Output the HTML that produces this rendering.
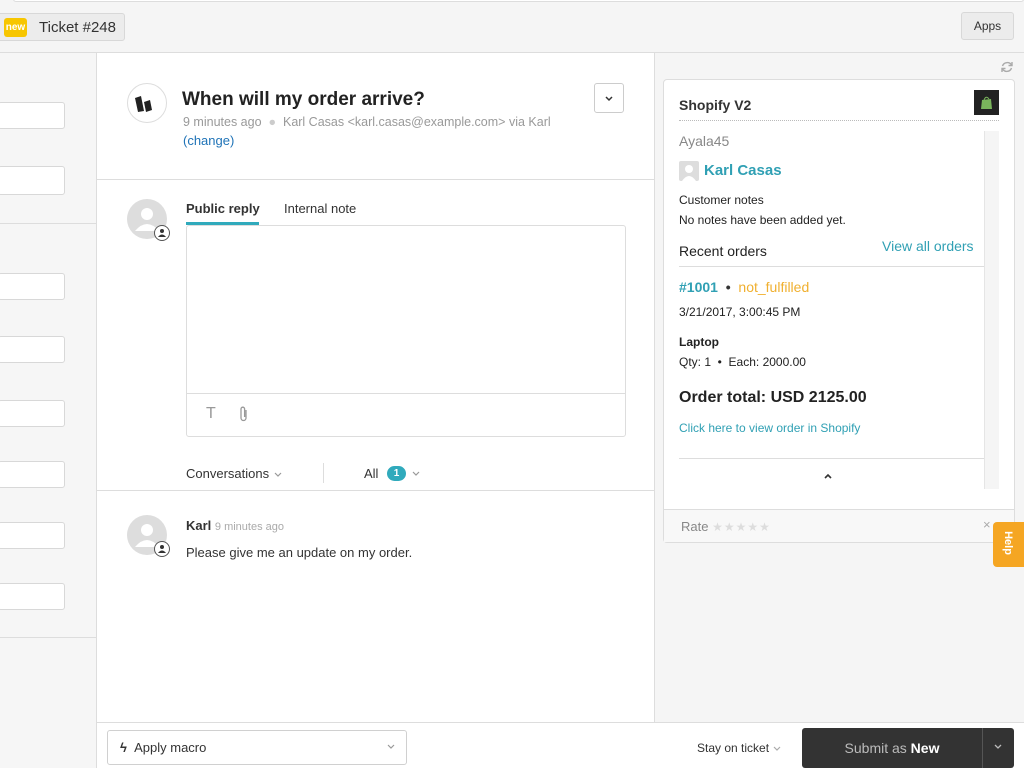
<!DOCTYPE html>
<html><head><meta charset="utf-8"><style>
*{box-sizing:border-box;margin:0;padding:0}
body{width:1024px;height:768px;overflow:hidden;font-family:"Liberation Sans",sans-serif;color:#333;background:#f5f5f5;position:relative;font-size:13px}
.abs{position:absolute}
.inp{position:absolute;left:-2px;width:67px;height:27px;background:#fff;border:1px solid #d8d8d8;border-radius:3px}
.av{position:absolute;width:40px;height:40px;border-radius:50%;background:#ddd;overflow:hidden}
.badge{position:absolute;width:16px;height:16px;border-radius:50%;background:#fff;border:1px solid #555}
.chev{display:inline-block;vertical-align:middle}
</style></head><body>
<div class="abs" style="left:0;top:0;width:1024px;height:53px;background:#f5f5f5;border-bottom:1px solid #ddd"></div>
<div class="abs" style="left:13px;top:-4px;width:1011px;height:6px;background:#fff;border:1px solid #ddd;border-radius:3px"></div>
<div class="abs" style="left:-3px;top:13px;width:128px;height:28px;background:#ececec;border:1px solid #d8d8d8;border-radius:3px"></div>
<div class="abs" style="left:4px;top:18px;width:23px;height:19px;background:#f7c600;border-radius:3px;color:#fff;font-size:10px;font-weight:bold;text-align:center;line-height:19px">new</div>
<div class="abs" style="left:39px;top:18px;font-size:15px;color:#333;line-height:19px">Ticket #248</div>
<div class="abs" style="left:961px;top:12px;width:53px;height:28px;background:#ececec;border:1px solid #d8d8d8;border-radius:3px;font-size:12px;text-align:center;line-height:26px">Apps</div>
<div class="abs" style="left:0;top:53px;width:97px;height:715px;background:#f6f6f6;border-right:1px solid #ddd"></div>
<div class="inp" style="top:102px"></div><div class="inp" style="top:166px;height:29px"></div>
<div class="abs" style="left:0;top:223px;width:96px;height:1px;background:#ddd"></div>
<div class="inp" style="top:273px"></div><div class="inp" style="top:336px"></div><div class="inp" style="top:400px"></div><div class="inp" style="top:461px"></div><div class="inp" style="top:522px"></div><div class="inp" style="top:583px"></div>
<div class="abs" style="left:0;top:637px;width:96px;height:1px;background:#ddd"></div>
<div class="abs" style="left:97px;top:53px;width:558px;height:669px;background:#fff;border-right:1px solid #ddd"></div>
<div class="abs" style="left:127px;top:83px;width:40px;height:40px;border-radius:50%;border:1px solid #ddd;background:#fff">
<svg width="38" height="38" viewBox="0 0 38 38"><path d="M7 14 L13 12 L16 27 L10 28Z" fill="#222"/><path d="M16 18 L22 16 L24 26 L18 28Z" fill="#222"/></svg></div>
<div class="abs" style="left:182px;top:89px;font-size:19px;font-weight:bold;color:#222">When will my order arrive?</div>
<div class="abs" style="left:183px;top:115px;font-size:12.5px;color:#999">9 minutes ago &nbsp;<span style="color:#ccc">●</span>&nbsp; Karl Casas &lt;karl.casas@example.com&gt; via Karl</div>
<div class="abs" style="left:183px;top:133px;font-size:13px;color:#1f73b7">(change)</div>
<div class="abs" style="left:594px;top:83px;width:30px;height:30px;border:1px solid #ccc;border-radius:3px"><svg width="28" height="28"><path d="M11 13 L14 16 L17 13" stroke="#333" stroke-width="1.5" fill="none"/></svg></div>
<div class="abs" style="left:97px;top:179px;width:557px;height:1px;background:#ddd"></div>
<div class="av" style="left:127px;top:199px"><svg width="40" height="40"><circle cx="20" cy="15" r="6" fill="#fff"/><path d="M8 32 Q20 18 32 32Z" fill="#fff"/></svg></div>
<div class="badge" style="left:154px;top:225px"><svg width="14" height="14"><circle cx="7" cy="5" r="2" fill="#333"/><path d="M3 11 Q7 6 11 11Z" fill="#333"/></svg></div>
<div class="abs" style="left:186px;top:201px;font-size:13px;font-weight:bold;color:#333">Public reply</div>
<div class="abs" style="left:186px;top:222px;width:73px;height:3px;background:#30aabc"></div>
<div class="abs" style="left:284px;top:201px;font-size:13px;color:#333">Internal note</div>
<div class="abs" style="left:186px;top:225px;width:440px;height:212px;border:1px solid #ddd;border-radius:3px"></div>
<div class="abs" style="left:187px;top:393px;width:438px;height:1px;background:#ddd"></div>
<div class="abs" style="left:206px;top:405px;font-size:16px;color:#999">T</div>
<svg class="abs" style="left:237px;top:405px" width="14" height="18"><path d="M9 5 V13 A2.5 2.5 0 0 1 4 13 V4 A1.8 1.8 0 0 1 7.6 4 V12" stroke="#999" stroke-width="1.3" fill="none"/></svg>
<div class="abs" style="left:186px;top:466px;font-size:13px;color:#333">Conversations <svg class="chev" width="10" height="8"><path d="M2 2 L5 5 L8 2" stroke="#999" stroke-width="1.2" fill="none"/></svg></div>
<div class="abs" style="left:323px;top:463px;width:1px;height:20px;background:#ddd"></div>
<div class="abs" style="left:364px;top:466px;font-size:13px;color:#333">All</div>
<div class="abs" style="left:387px;top:466px;width:19px;height:15px;border-radius:8px;background:#30aabc;color:#fff;font-size:10px;font-weight:bold;text-align:center;line-height:15px">1</div>
<svg class="abs" style="left:411px;top:470px" width="10" height="8"><path d="M2 2 L5 5 L8 2" stroke="#999" stroke-width="1.2" fill="none"/></svg>
<div class="abs" style="left:97px;top:490px;width:557px;height:1px;background:#ddd"></div>
<div class="av" style="left:127px;top:515px"><svg width="40" height="40"><circle cx="20" cy="15" r="6" fill="#fff"/><path d="M8 32 Q20 18 32 32Z" fill="#fff"/></svg></div>
<div class="badge" style="left:154px;top:541px"><svg width="14" height="14"><circle cx="7" cy="5" r="2" fill="#333"/><path d="M3 11 Q7 6 11 11Z" fill="#333"/></svg></div>
<div class="abs" style="left:186px;top:518px;font-size:13px;font-weight:bold;color:#333">Karl <span style="font-weight:normal;color:#aaa;font-size:11px">9 minutes ago</span></div>
<div class="abs" style="left:186px;top:545px;font-size:13px;color:#333">Please give me an update on my order.</div>
<div class="abs" style="left:97px;top:722px;width:927px;height:46px;background:#fff;border-top:1px solid #ddd"></div>
<div class="abs" style="left:107px;top:730px;width:300px;height:35px;border:1px solid #d0d0d0;border-radius:3px;background:#fff"></div>
<div class="abs" style="left:120px;top:740px;font-size:13px;color:#333"><b>ϟ</b>&nbsp; Apply macro</div>
<svg class="abs" style="left:386px;top:743px" width="10" height="8"><path d="M2 2 L5 5 L8 2" stroke="#999" stroke-width="1.2" fill="none"/></svg>
<div class="abs" style="left:697px;top:741px;font-size:12px;color:#333">Stay on ticket <svg class="chev" width="10" height="8"><path d="M2 2 L5 5 L8 2" stroke="#aaa" stroke-width="1.2" fill="none"/></svg></div>
<div class="abs" style="left:802px;top:728px;width:212px;height:40px;background:#333;border-radius:3px"></div>
<div class="abs" style="left:982px;top:728px;width:1px;height:40px;background:#555"></div>
<div class="abs" style="left:802px;top:740px;width:180px;text-align:center;font-size:14px;color:#bbb">Submit as <b style="color:#fff">New</b></div>
<svg class="abs" style="left:993px;top:743px" width="10" height="8"><path d="M2 2 L5 5 L8 2" stroke="#bbb" stroke-width="1.3" fill="none"/></svg>
<svg class="abs" style="left:1000px;top:60px" width="14" height="14"><path d="M2.5 6 A5 5 0 0 1 11.5 5 M11.5 8 A5 5 0 0 1 2.5 9" stroke="#aaa" stroke-width="1.4" fill="none"/><path d="M12 2 V5.5 H8.5" stroke="#aaa" stroke-width="1.4" fill="none"/><path d="M2 12 V8.5 H5.5" stroke="#aaa" stroke-width="1.4" fill="none"/></svg>
<div class="abs" style="left:663px;top:79px;width:352px;height:464px;background:#fff;border:1px solid #ddd;border-radius:4px"></div>
<div class="abs" style="left:679px;top:97px;font-size:14px;font-weight:bold;color:#333">Shopify V2</div>
<div class="abs" style="left:974px;top:90px;width:25px;height:25px;background:#222"><svg width="25" height="25"><path d="M8 10 L17 9 L18 19 L7 19Z" fill="#7ab55c"/><path d="M10 10 Q12 5 15 9" stroke="#7ab55c" fill="none"/></svg></div>
<div class="abs" style="left:679px;top:120px;width:320px;border-top:1px dotted #bbb"></div>
<div class="abs" style="left:984px;top:131px;width:15px;height:358px;background:#f5f5f5;border-left:1px solid #e5e5e5"></div>
<div class="abs" style="left:679px;top:133px;font-size:14px;color:#888">Ayala45</div>
<div class="abs" style="left:679px;top:161px;width:20px;height:20px;background:#ddd;border-radius:2px"><svg width="20" height="20"><circle cx="10" cy="8" r="4" fill="#fff"/><path d="M3 20 Q10 10 17 20Z" fill="#fff"/></svg></div>
<div class="abs" style="left:704px;top:162px;font-size:15px;font-weight:bold;color:#30a0b4">Karl Casas</div>
<div class="abs" style="left:679px;top:193px;font-size:12px;color:#222">Customer notes</div>
<div class="abs" style="left:679px;top:213px;font-size:12px;color:#222">No notes have been added yet.</div>
<div class="abs" style="left:679px;top:243px;font-size:14px;color:#222">Recent orders</div>
<div class="abs" style="left:882px;top:238px;font-size:14px;color:#30a0b4">View all orders</div>
<div class="abs" style="left:679px;top:266px;width:305px;height:1px;background:#ddd"></div>
<div class="abs" style="left:679px;top:279px;font-size:14px;font-weight:bold;color:#30a0b4">#1001 <span style="color:#333">&nbsp;•&nbsp;</span> <span style="font-weight:normal;color:#f0b030">not_fulfilled</span></div>
<div class="abs" style="left:679px;top:305px;font-size:12px;color:#222">3/21/2017, 3:00:45 PM</div>
<div class="abs" style="left:679px;top:335px;font-size:12px;font-weight:bold;color:#222">Laptop</div>
<div class="abs" style="left:679px;top:355px;font-size:12px;color:#222">Qty: 1 &nbsp;•&nbsp; Each: 2000.00</div>
<div class="abs" style="left:679px;top:389px;font-size:16px;font-weight:bold;color:#222">Order total: USD 2125.00</div>
<div class="abs" style="left:679px;top:421px;font-size:12px;color:#30a0b4">Click here to view order in Shopify</div>
<div class="abs" style="left:679px;top:458px;width:305px;height:1px;background:#ddd"></div>
<svg class="abs" style="left:823px;top:472px" width="10" height="8"><path d="M2 6 L5 3 L8 6" stroke="#333" stroke-width="1.6" fill="none"/></svg>
<div class="abs" style="left:664px;top:509px;width:350px;height:1px;background:#ddd"></div>
<div class="abs" style="left:664px;top:510px;width:350px;height:32px;background:#f8f8f8"></div>
<div class="abs" style="left:681px;top:519px;font-size:13px;color:#888">Rate <span style="color:#ddd;font-size:12px;letter-spacing:1px">★★★★★</span></div>
<div class="abs" style="left:983px;top:517px;font-size:13px;color:#aaa">×</div>
<div class="abs" style="left:993px;top:522px;width:31px;height:45px;background:#f5a623;border-radius:4px 0 0 4px"></div>
<div class="abs" style="left:996px;top:537px;font-size:11px;color:#fff;transform:rotate(90deg);font-weight:bold">Help</div>
</body></html>
